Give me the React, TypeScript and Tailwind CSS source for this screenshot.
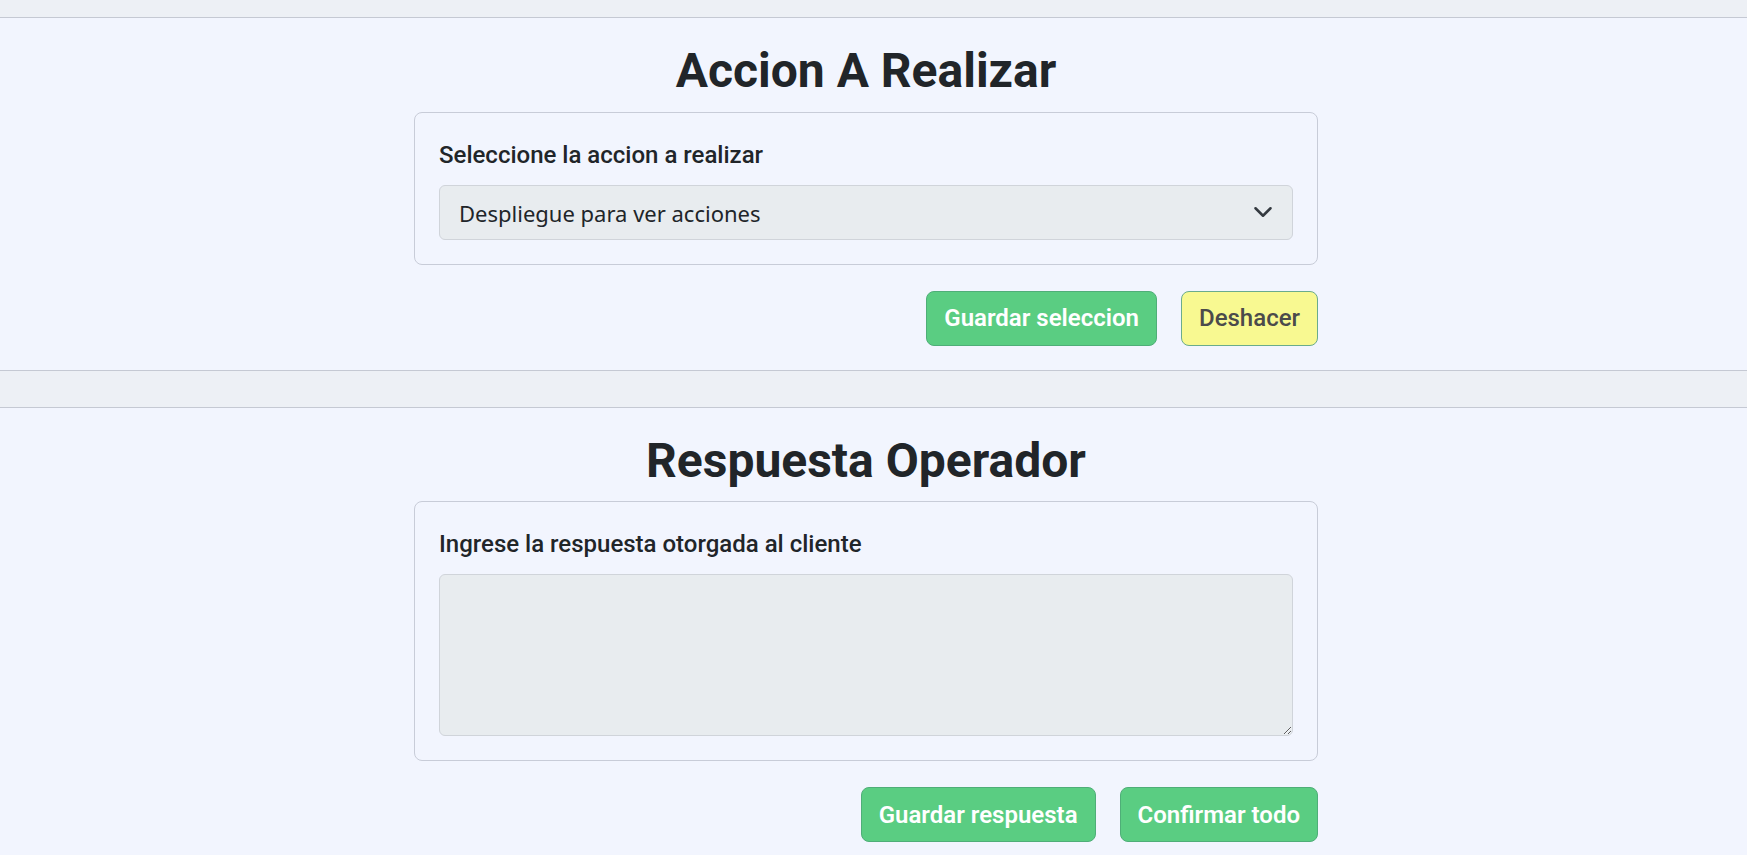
import React from "react";

const Chevron = () => (
  <svg
    viewBox="0 0 16 16"
    className="pointer-events-none absolute right-[20px] top-1/2 h-5 w-5 -translate-y-1/2"
    fill="none"
    stroke="#343a40"
    strokeWidth="2"
    strokeLinecap="round"
    strokeLinejoin="round"
  >
    <path d="m2 5 6 6 6-6" />
  </svg>
);

const Section = ({
  title,
  children,
  buttons,
}: {
  title: string;
  children: React.ReactNode;
  buttons: React.ReactNode;
}) => (
  <section className="border-y border-[#c5c9d3] bg-[#f2f5fe]">
    <div className="flex justify-center pr-[15px]">
      <div className="w-[904px] pt-[24px] pb-[24px]">
        <h2 className="text-center text-[48px] leading-[1.2] font-bold text-[#212529]">
          {title}
        </h2>
        <div className="mt-[12px] rounded-[8px] border border-[#c8ccd8] p-[24px]">
          {children}
        </div>
        <div className="mt-[26px] flex justify-end gap-[24px]">{buttons}</div>
      </div>
    </div>
  </section>
);

const GreenButton = ({ label }: { label: string }) => (
  <button className="h-[55px] rounded-[8px] border border-[#4fae78] bg-[#5acd82] px-[17px] text-[24px] font-semibold text-white">
    {label}
  </button>
);

export default function App() {
  const [accion, setAccion] = React.useState("");
  const [respuesta, setRespuesta] = React.useState("");

  return (
    <div className="min-h-[855px] bg-[#edf0f5] font-['Roboto',sans-serif]">
      <div className="h-[17px]" />
      <Section
        title="Accion A Realizar"
        buttons={
          <>
            <GreenButton label="Guardar seleccion" />
            <button className="h-[55px] rounded-[8px] border border-[#6aac8c] bg-[#f8f991] px-[17px] text-[24px] font-medium text-[#4b4b4b]">
              Deshacer
            </button>
          </>
        }
      >
        <label className="mb-[12px] block text-[24px] leading-[36px] font-medium text-[#212529]">
          Seleccione la accion a realizar
        </label>
        <div className="relative">
          <select
            value={accion}
            onChange={(e) => setAccion(e.target.value)}
            className="h-[55px] w-full appearance-none rounded-[6px] border border-[#d0d4da] bg-[#e8ecef] pt-[2px] pl-[19px] font-['Noto_Sans',sans-serif] text-[22px] text-[#212529] outline-none"
          >
            <option value="">Despliegue para ver acciones</option>
            <option value="1">Escalar caso</option>
            <option value="2">Cerrar caso</option>
          </select>
          <Chevron />
        </div>
      </Section>
      <div className="h-[36px]" />
      <Section
        title="Respuesta Operador"
        buttons={
          <>
            <GreenButton label="Guardar respuesta" />
            <GreenButton label="Confirmar todo" />
          </>
        }
      >
        <label className="mb-[12px] block text-[24px] leading-[36px] font-medium text-[#212529]">
          Ingrese la respuesta otorgada al cliente
        </label>
        <textarea
          value={respuesta}
          onChange={(e) => setRespuesta(e.target.value)}
          className="block h-[162px] w-full rounded-[6px] border border-[#d0d4da] bg-[#e8ecef] p-3 font-['Noto_Sans',sans-serif] text-[22px] outline-none"
        />
      </Section>
    </div>
  );
}
